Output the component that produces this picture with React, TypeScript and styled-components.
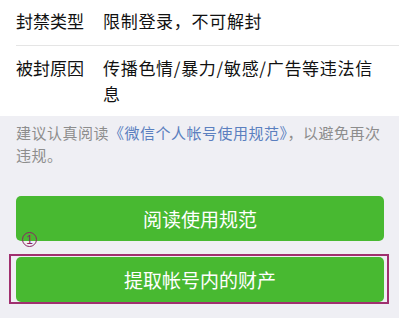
import React from "react";
import styled, { createGlobalStyle } from "styled-components";

const GlobalStyle = createGlobalStyle`
  html, body {
    margin: 0;
    padding: 0;
    background: #efeff4;
  }
  body {
    font-family: "Noto Sans CJK SC", "Noto Sans", sans-serif;
  }
`;

const Page = styled.div`
  width: 399px;
  height: 318px;
  overflow: hidden;
  background: #efeff4;
  display: flex;
  flex-direction: column;
`;

const InfoCard = styled.div`
  background: #fff;
  padding-left: 16px;
`;

const InfoRow = styled.div<{ last?: boolean }>`
  display: flex;
  padding: ${props => (props.last ? "9px 16px 9px 0" : "8px 16px 11px 0")};
  border-bottom: ${props => (props.last ? "none" : "1px solid #e5e5e5")};
  font-size: 17px;
  line-height: 26px;
  color: #111;
`;

const Label = styled.div`
  flex: 0 0 87px;
  white-space: nowrap;
`;

const Value = styled.div`
  flex: 1;
  letter-spacing: 0.7px;
`;

const Notice = styled.p`
  margin: 6px 16px 0;
  font-size: 15px;
  letter-spacing: 0.5px;
  line-height: 22px;
  color: #8d8d8d;
`;

const Link = styled.span`
  color: #5b7fbf;
`;

const Actions = styled.div`
  display: flex;
  flex-direction: column;
  gap: 16px;
  margin: 30px 15px 0 16px;
`;

const Slot = styled.div`
  position: relative;
`;

const GreenButton = styled.button`
  display: flex;
  align-items: center;
  justify-content: center;
  width: 100%;
  height: 45px;
  border: none;
  border-radius: 5px;
  background: #48b931;
  color: #fff;
  font-family: inherit;
  font-size: 19px;
  padding: 0;
`;

const Marker = styled.span`
  position: absolute;
  left: 6px;
  top: 36px;
  width: 13px;
  height: 13px;
  border: 1.5px solid #8b2563;
  border-radius: 50%;
  display: flex;
  align-items: center;
  justify-content: center;
  font-family: "Liberation Sans", sans-serif;
  font-size: 12px;
  line-height: 12px;
  color: #8b2563;
`;

const Highlight = styled.div`
  position: absolute;
  top: -3px;
  bottom: -2px;
  left: -7px;
  right: -5px;
  border: 2px solid #a0306f;
  pointer-events: none;
`;

export default function App() {
  return (
    <Page>
      <GlobalStyle />
      <InfoCard>
        <InfoRow>
          <Label>封禁类型</Label>
          <Value>限制登录，不可解封</Value>
        </InfoRow>
        <InfoRow last>
          <Label>被封原因</Label>
          <Value>传播色情/暴力/敏感/广告等违法信息</Value>
        </InfoRow>
      </InfoCard>
      <Notice>
        建议认真阅读<Link>《微信个人帐号使用规范》</Link>，以避免再次违规。
      </Notice>
      <Actions>
        <Slot>
          <GreenButton>阅读使用规范</GreenButton>
          <Marker>1</Marker>
        </Slot>
        <Slot>
          <GreenButton>提取帐号内的财产</GreenButton>
          <Highlight />
        </Slot>
      </Actions>
    </Page>
  );
}
